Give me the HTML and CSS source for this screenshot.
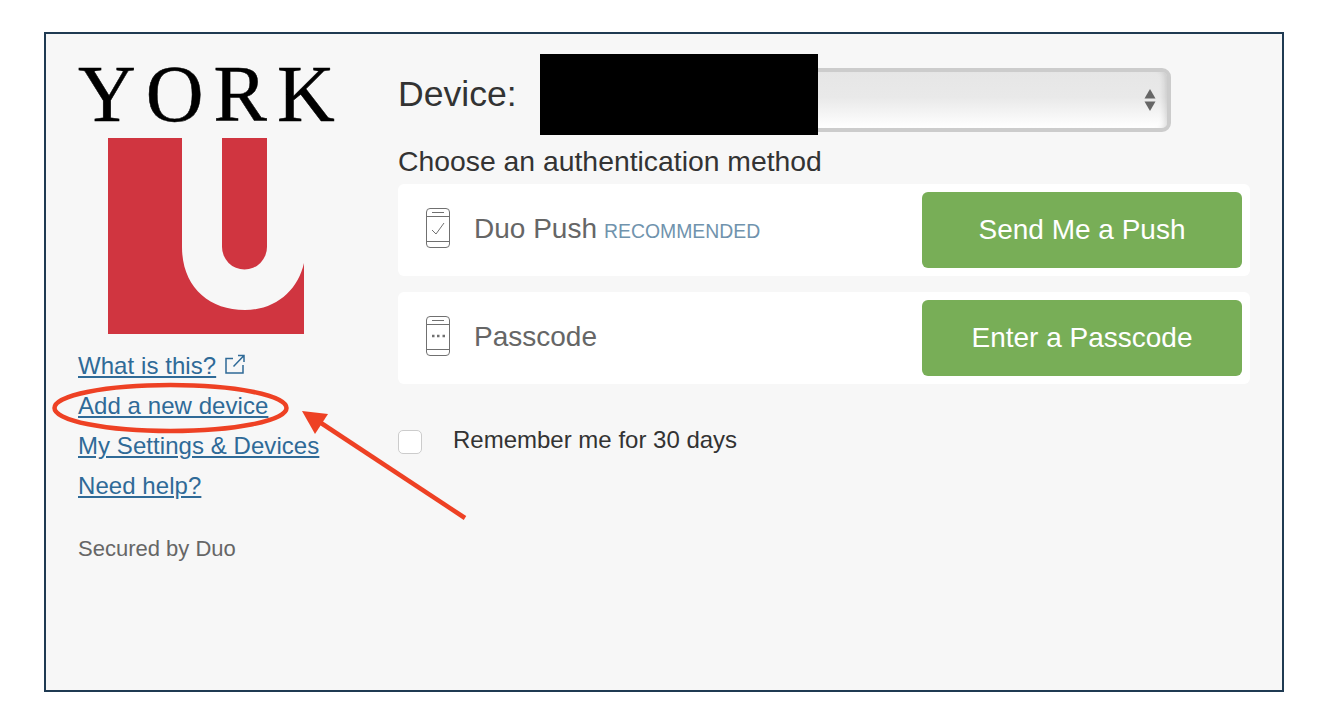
FILE: index.html
```html
<!DOCTYPE HTML>
<html lang="en">
  <head>
    <title>Duo Security</title>
    <meta charset="utf-8">
    <link rel="stylesheet" href="styles.css">
  </head>
  <body>

  <div class="frame">
    <div class="sidebar">
      <div class="wordmark">YORK</div>
      <svg class="mark" width="196" height="196" viewBox="0 0 196 196">
        <path fill="#d03540" d="M0 0H74V109C74 148 100 172 137 172C168 172 190 152 196 125V196H0Z"/>
        <path fill="#d03540" d="M114 0H159V109A22.5 22.5 0 0 1 114 109Z"/>
      </svg>
      <div class="links">
        <div class="link-row">
          <a href="#">What is this?</a>
          <svg class="ext" width="20" height="20" viewBox="0 0 20 20" fill="none" stroke="#2f6a97" stroke-width="1.5">
            <path d="M8 4.5H1V19H18V11"/>
            <path d="M8.5 12.5L19 1.5M13 1.5H19V8"/>
          </svg>
        </div>
        <div class="link-row"><a href="#">Add a new device</a></div>
        <div class="link-row"><a href="#">My Settings &amp; Devices</a></div>
        <div class="link-row"><a href="#">Need help?</a></div>
      </div>
      <div class="secured">Secured by Duo</div>
    </div>

    <div class="main">
      <div class="device-row">
        <label class="device-label">Device:</label>
        <div class="select">
          <div class="redacted"></div>
          <svg class="updown" width="12" height="22" viewBox="0 0 12 22" fill="#666">
            <path d="M6 0L11.5 9.5H.5Z"/>
            <path d="M.5 12.5H11.5L6 22Z"/>
          </svg>
        </div>
      </div>

      <h1 class="choose">Choose an authentication method</h1>

      <div class="method">
        <div class="method-info">
          <svg class="phone" width="24" height="40" viewBox="0 0 24 40" fill="none" stroke="#707070" stroke-width="1">
            <rect x=".5" y=".5" width="23" height="39" rx="3.5"/>
            <path d="M.5 8.5H23.5M.5 33.5H23.5M6 4.5H18"/>
            <path d="M6 22L10 26L18 15"/>
          </svg>
          <span class="method-name">Duo Push</span>
          <span class="recommended">RECOMMENDED</span>
        </div>
        <button class="action">Send Me a Push</button>
      </div>

      <div class="method">
        <div class="method-info">
          <svg class="phone" width="24" height="40" viewBox="0 0 24 40" fill="none" stroke="#707070" stroke-width="1">
            <rect x=".5" y=".5" width="23" height="39" rx="3.5"/>
            <path d="M.5 8.5H23.5M.5 33.5H23.5M6 4.5H18"/>
            <path d="M6 20H8.5M11 20H13.5M16.5 20H19" stroke-width="2.5"/>
          </svg>
          <span class="method-name">Passcode</span>
        </div>
        <button class="action">Enter a Passcode</button>
      </div>

      <div class="remember">
        <span class="checkbox"></span>
        <span class="remember-text">Remember me for 30 days</span>
      </div>
    </div>
  </div>

  <svg class="annotation" width="1328" height="726" viewBox="0 0 1328 726" fill="none" stroke="#ee4124">
    <ellipse cx="170.5" cy="408" rx="116" ry="23" stroke-width="4.5"/>
    <path d="M465 518L318 421" stroke-width="4.5"/>
    <path d="M302 411L328 414L315 434Z" fill="#ee4124" stroke="none"/>
  </svg>

  </body>
</html>
```

FILE: styles.css
```css
html {
  height: 100%;
}
body {
  margin: 0;
  padding: 32px 44px 0;
  background: #ffffff;
  color: #333333;
  font-family: "Liberation Sans", Arial, sans-serif;
}

.frame {
  box-sizing: border-box;
  width: 1240px;
  height: 660px;
  border: 2px solid #1f3a52;
  background: #f7f7f7;
  display: flex;
}

.sidebar {
  width: 352px;
  flex: none;
  box-sizing: border-box;
  padding-left: 32px;
}

.wordmark {
  margin-top: 18px;
  height: 86px;
  font: 80px/84px "Liberation Serif", "Times New Roman", serif;
  letter-spacing: 10px;
  -webkit-text-stroke: 0.5px #000000;
  color: #000000;
  white-space: nowrap;
}

.mark {
  display: block;
  margin-left: 30px;
}

.links {
  margin-top: 12px;
  font-size: 24px;
  line-height: 40px;
  letter-spacing: 0.06px;
}
.link-row {
  display: flex;
  align-items: center;
  gap: 9px;
}
.links a {
  color: #2f6a97;
}
.ext {
  margin-top: -4px;
}

.secured {
  margin-top: 31px;
  font-size: 22px;
  line-height: 24px;
  color: #666666;
}

.main {
  width: 852px;
  flex: none;
  padding-top: 34px;
}

.device-row {
  display: flex;
  align-items: center;
  gap: 24px;
  height: 64px;
}
.device-label {
  font-size: 35.6px;
  width: 118px;
  margin-top: -12px;
  white-space: nowrap;
}
.select {
  box-sizing: border-box;
  position: relative;
  width: 631px;
  height: 64px;
  border: 4px solid #cccccc;
  border-radius: 9px;
  background: linear-gradient(#e6e6e6, #e9e9e9 45%, #ffffff);
  box-shadow: inset -7px 0 6px -5px rgba(0,0,0,0.14);
}
.redacted {
  position: absolute;
  left: -4px;
  top: -18px;
  width: 278px;
  height: 81px;
  background: #000000;
}
.updown {
  position: absolute;
  right: 11px;
  top: 17px;
}

.choose {
  margin: 13px 0 7px;
  font-size: 28.35px;
  font-weight: normal;
  line-height: 32px;
}

.method {
  box-sizing: border-box;
  height: 92px;
  margin-bottom: 16px;
  padding: 8px;
  background: #ffffff;
  border-radius: 6px;
  display: flex;
  justify-content: space-between;
}
.method-info {
  display: flex;
  align-items: center;
  padding-left: 20px;
}
.phone {
  margin-right: 24px;
  margin-top: -4px;
}
.method-name {
  margin-top: -2px;
  font-size: 28px;
  color: #666666;
}
.recommended {
  margin-left: 7px;
  margin-top: 3px;
  font-size: 19.4px;
  color: #7093ad;
}
.action {
  width: 320px;
  height: 76px;
  border: 0;
  border-radius: 6px;
  background: #78ae57;
  color: #ffffff;
  font-family: inherit;
  font-size: 28px;
}

.remember {
  display: flex;
  align-items: center;
  margin-top: 46px;
}
.checkbox {
  box-sizing: border-box;
  width: 24px;
  height: 24px;
  border: 1px solid #cccccc;
  border-radius: 5px;
  background: #ffffff;
}
.remember-text {
  margin-left: 31px;
  font-size: 24px;
  margin-top: -4px;
}

.annotation {
  position: absolute;
  left: 0;
  top: 0;
  pointer-events: none;
}
```
